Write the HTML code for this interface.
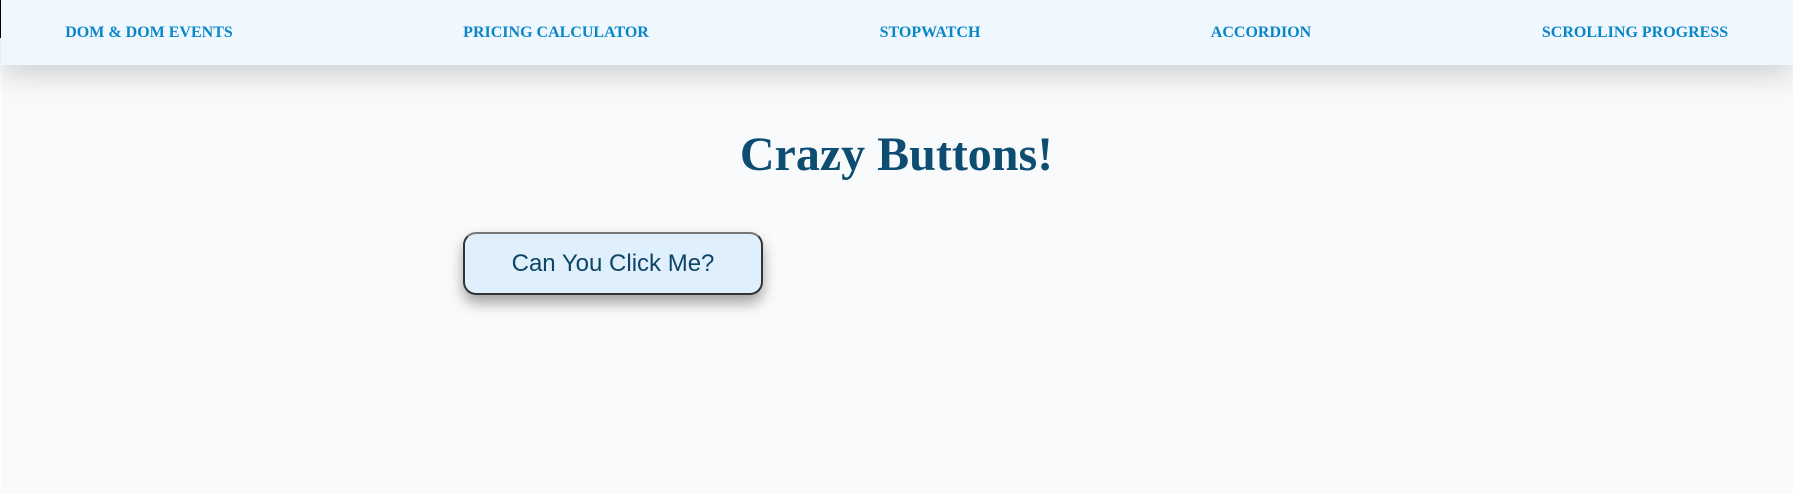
<!DOCTYPE html>
<html><head><style>
html,body{margin:0;padding:0;}
body{width:1793px;height:494px;background:#f8fafc;position:relative;overflow:hidden;font-family:"Liberation Serif",serif;}
.nav{position:absolute;left:1px;top:0;width:1792px;height:65px;background:#eff8ff;box-shadow:0 10px 30px rgba(0,0,0,0.17);}
.nav a{position:absolute;top:23px;transform:translateX(-50%);white-space:nowrap;font-weight:bold;font-size:16px;color:#0a85c8;text-decoration:none;line-height:20px;}
.mark{position:absolute;left:0;top:0;width:1px;height:38px;background:#000;z-index:3;}
.edge{position:absolute;left:0;top:38px;width:1px;height:456px;background:#fff;}
h1{position:absolute;left:0;width:1793px;top:120px;margin:0;text-align:center;font-size:48px;line-height:70px;color:#0e4d72;font-weight:bold;}
.btn{position:absolute;left:463px;top:232px;width:300px;height:63px;box-sizing:border-box;border:2px solid #333;border-top-color:#777;border-radius:13px;background:#dff0fc;box-shadow:0 8px 14px rgba(0,0,0,0.35);font-family:"Liberation Sans",sans-serif;font-size:24px;color:#0e4466;text-align:center;line-height:60px;}
</style></head><body>
<div class="mark"></div><div class="edge"></div>
<div class="nav">
<a style="left:148px">DOM &amp; DOM EVENTS</a>
<a style="left:555px">PRICING CALCULATOR</a>
<a style="left:929px">STOPWATCH</a>
<a style="left:1260px">ACCORDION</a>
<a style="left:1634px">SCROLLING PROGRESS</a>
</div>
<h1>Crazy Buttons!</h1>
<div class="btn">Can You Click Me?</div>
</body></html>
